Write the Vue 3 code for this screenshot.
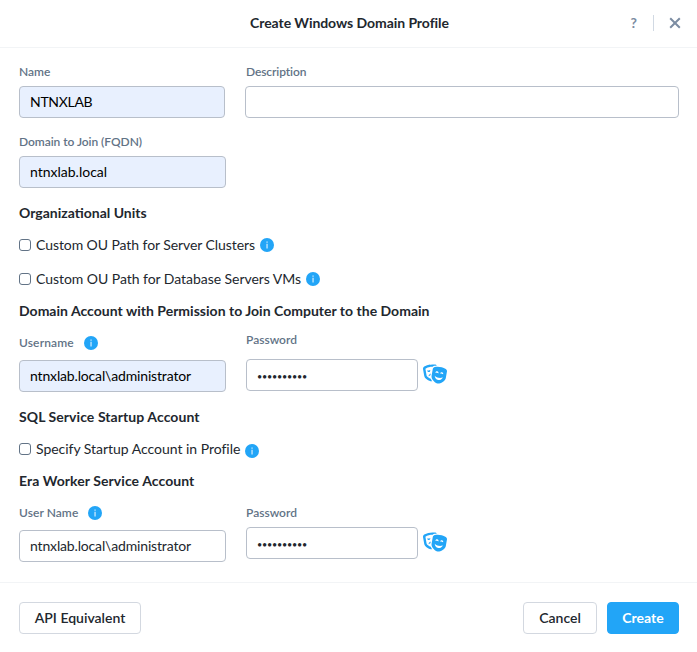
<script setup>
import { reactive } from 'vue'

const MASKS =
  'M206.86 245.15c-35.88 10.45-59.95 41.2-57.53 74.1 11.4-12.72 28.81-23.7 49.9-30.92l7.63-43.18zM95.81 295L64.08 115.49c-.29-1.62.28-2.62.24-2.65 57.76-32.06 123.12-49.01 189.01-49.01 1.61 0 3.23.17 4.85.19 13.95-13.47 31.73-22.83 51.59-26 18.89-3.02 38.05-4.55 57.18-5.32-9.99-13.95-24.48-24.23-41.77-27C301.27 1.89 277.24 0 253.32 0 176.66 0 101.02 19.42 33.2 57.06 9.03 70.48-3.92 98.48 1.05 126.58l31.73 179.51c14.23 80.52 136.33 142.08 204.45 142.08 3.59 0 6.75-.46 10.01-.8-13.52-17.08-28.94-40.48-39.5-67.58-47.61-12.98-106.06-51.62-111.93-84.79zm97.55-137.46c-.73-4.12-2.23-7.87-4.07-11.4-8.25 8.91-20.67 15.75-35.32 18.32-14.65 2.58-28.67.4-39.48-5.17-.52 3.94-.64 7.98.09 12.1 3.84 21.7 24.58 36.19 46.34 32.37 21.75-3.82 36.28-24.52 32.44-46.22zM606.8 120.9c-88.98-49.38-191.43-67.41-291.98-51.35-27.31 4.36-49.08 26.26-54.04 54.36l-31.73 179.51c-15.39 87.05 95.28 196.27 158.31 207.35 63.03 11.09 204.47-53.79 219.86-140.84l31.73-179.51c4.97-28.11-7.98-56.11-32.15-69.52zm-273.24 96.8c3.84-21.7 24.58-36.19 46.34-32.36 21.76 3.83 36.28 24.52 32.45 46.22-.73 4.12-2.23 7.87-4.07 11.4-8.25-8.91-20.67-15.75-35.32-18.32-14.65-2.58-28.67-.4-39.48 5.17-.53-3.95-.65-7.99.08-12.11zm70.47 198.76c-55.68-9.79-93.52-59.27-89.04-112.9 20.6 25.54 56.21 46.17 99.49 53.78 43.28 7.61 83.82.37 111.93-16.6-14.18 51.94-66.71 85.51-122.38 75.72zm130.3-151.34c-8.25-8.91-20.68-15.75-35.33-18.32-14.65-2.58-28.67-.4-39.48 5.17-.52-3.94-.64-7.98.09-12.1 3.84-21.7 24.58-36.19 46.34-32.37 21.75 3.83 36.28 24.52 32.45 46.22-.73 4.13-2.23 7.88-4.07 11.4z'

const form = reactive({
  name: 'NTNXLAB',
  description: '',
  domain: 'ntnxlab.local',
  joinUser: 'ntnxlab.local\\administrator',
  joinPassword: '••••••••••',
  workerUser: 'ntnxlab.local\\administrator',
  workerPassword: '••••••••••',
  clusters: false,
  servers: false,
  startup: false,
})
</script>

<template>
  <div class="dialog">
    <header class="header">
      <h1 class="title">Create Windows Domain Profile</h1>
      <div class="tools">
        <span class="help">?</span>
        <span class="rule"></span>
        <svg class="close" viewBox="0 0 12 12"><path d="M1.2 1.2l9.6 9.6M10.8 1.2l-9.6 9.6" /></svg>
      </div>
    </header>

    <main class="body">
      <div class="row wide">
        <div class="field">
          <label class="label">Name</label>
          <input v-model="form.name" class="input filled t-name" />
        </div>
        <div class="field">
          <label class="label l-desc">Description</label>
          <input v-model="form.description" class="input" />
        </div>
      </div>

      <div class="row">
        <div class="field">
          <label class="label l-domain">Domain to Join (FQDN)</label>
          <input v-model="form.domain" class="input filled" />
        </div>
      </div>

      <h2 class="heading">Organizational Units</h2>
      <label class="check">
        <input v-model="form.clusters" type="checkbox" class="box" />
        <span class="c-clusters">Custom OU Path for Server Clusters</span>
        <span class="info"><svg viewBox="0 0 14 14"><circle cx="7" cy="7" r="7" /><path d="M6.4 3.4h1.3v1.3H6.4zM6.4 5.8h1.3v4.8H6.4z" /></svg></span>
      </label>
      <label class="check second">
        <input v-model="form.servers" type="checkbox" class="box" />
        <span class="c-servers">Custom OU Path for Database Servers VMs</span>
        <span class="info"><svg viewBox="0 0 14 14"><circle cx="7" cy="7" r="7" /><path d="M6.4 3.4h1.3v1.3H6.4zM6.4 5.8h1.3v4.8H6.4z" /></svg></span>
      </label>

      <h2 class="heading tight h-join">Domain Account with Permission to Join Computer to the Domain</h2>
      <div class="row account">
        <div class="field user lowered">
          <div class="label-line">
            <label class="label l-user">Username</label>
            <span class="info"><svg viewBox="0 0 14 14"><circle cx="7" cy="7" r="7" /><path d="M6.4 3.4h1.3v1.3H6.4zM6.4 5.8h1.3v4.8H6.4z" /></svg></span>
          </div>
          <input v-model="form.joinUser" class="input filled t-user" />
        </div>
        <div class="field spaced">
          <label class="label">Password</label>
          <div class="secret">
            <input v-model="form.joinPassword" class="input dots" />
            <svg class="masks" viewBox="0 0 640 512"><path :d="MASKS" /></svg>
          </div>
        </div>
      </div>

      <h2 class="heading h-account">SQL Service Startup Account</h2>
      <label class="check">
        <input v-model="form.startup" type="checkbox" class="box" />
        <span class="c-startup">Specify Startup Account in Profile</span>
        <span class="info low"><svg viewBox="0 0 14 14"><circle cx="7" cy="7" r="7" /><path d="M6.4 3.4h1.3v1.3H6.4zM6.4 5.8h1.3v4.8H6.4z" /></svg></span>
      </label>

      <h2 class="heading tight h-account">Era Worker Service Account</h2>
      <div class="row worker">
        <div class="field user">
          <div class="label-line">
            <label class="label l-worker">User Name</label>
            <span class="info"><svg viewBox="0 0 14 14"><circle cx="7" cy="7" r="7" /><path d="M6.4 3.4h1.3v1.3H6.4zM6.4 5.8h1.3v4.8H6.4z" /></svg></span>
          </div>
          <input v-model="form.workerUser" class="input t-user" />
        </div>
        <div class="field">
          <label class="label">Password</label>
          <div class="secret">
            <input v-model="form.workerPassword" class="input dots" />
            <svg class="masks" viewBox="0 0 640 512"><path :d="MASKS" /></svg>
          </div>
        </div>
      </div>
    </main>

    <footer class="footer">
      <button class="button api">API Equivalent</button>
      <span class="grow"></span>
      <button class="button cancel">Cancel</button>
      <button class="button primary">Create</button>
    </footer>
  </div>
</template>

<style>
body {
  background: #fff;
}
</style>

<style scoped>
* {
  box-sizing: border-box;
}
.dialog {
  width: 697px;
  height: 652px;
  background: #fff;
  color: #22272e;
  font-family: Lato, "Liberation Sans", sans-serif;
  font-size: 14px;
  line-height: 20px;
  white-space: nowrap;
}
.header {
  display: grid;
  grid-template-columns: 1fr auto 1fr;
  align-items: center;
  height: 48px;
  padding: 0 16px 1px 18px;
  border-bottom: 1px solid #f2f4f6;
}
.title {
  grid-column: 2;
  margin: 0;
  font-size: 14px;
  font-weight: 700;
  letter-spacing: -0.06px;
}
.tools {
  display: flex;
  align-items: center;
  justify-content: flex-end;
}
.help {
  color: #7b8ca2;
  font-weight: 700;
}
.rule {
  width: 1px;
  height: 16px;
  margin: 0 15px 0 16px;
  background: #d1d9e3;
}
.close {
  width: 12px;
  height: 12px;
}
.close path {
  fill: none;
  stroke: #7b8ca2;
  stroke-width: 2;
}
.body {
  padding: 0 18px 0 19px;
}
.row {
  display: grid;
  grid-template-columns: 207px 1fr;
  column-gap: 20px;
  margin-top: 16px;
}
.row.wide {
  grid-template-columns: 206px 1fr;
}
.row.account {
  margin-top: 11px;
}
.row.worker {
  margin-top: 14px;
}
.field {
  display: flex;
  flex-direction: column;
  gap: 6px;
}
.field.user {
  gap: 9px;
}
.field.lowered {
  padding-top: 3px;
}
.field.spaced {
  gap: 11px;
}
.label {
  height: 16px;
  color: #627386;
  font-size: 12px;
  font-weight: 600;
  line-height: 16px;
}
.l-desc {
  padding-left: 1px;
  letter-spacing: -0.1px;
}
.l-domain {
  letter-spacing: -0.05px;
}
.l-user {
  letter-spacing: 0.14px;
}
.l-worker {
  letter-spacing: 0.06px;
}
.label-line {
  display: flex;
  align-items: center;
  gap: 10px;
  height: 16px;
}
.input {
  width: 100%;
  height: 32px;
  margin: 0;
  padding: 0 10px 2px;
  border: 1px solid #b8bfca;
  border-radius: 4px;
  outline: none;
  background: #fff;
  color: #22272e;
  font: inherit;
}
.filled {
  background: #e8f0fe;
  color: #000;
}
.t-name {
  letter-spacing: -0.3px;
}
.t-user {
  letter-spacing: -0.16px;
}
.secret {
  display: flex;
  align-items: center;
  gap: 5px;
}
.dots {
  width: 172px;
  padding: 2px 10px 0;
  font-size: 9px;
  letter-spacing: -0.22px;
}
.masks {
  width: 24px;
  height: 20px;
  margin-bottom: 3px;
  fill: #22a5f7;
}
.heading {
  height: 20px;
  margin: 15px 0 0;
  font-size: 14px;
  font-weight: 700;
}
.heading.tight {
  margin-top: 12px;
}
.h-join {
  letter-spacing: 0.017px;
}
.h-account {
  letter-spacing: 0.07px;
}
.check {
  display: flex;
  align-items: center;
  height: 20px;
  margin-top: 12px;
}
.check.second {
  margin-top: 14px;
}
.c-clusters {
  letter-spacing: -0.075px;
}
.c-servers {
  letter-spacing: -0.045px;
}
.c-startup {
  letter-spacing: -0.03px;
}
.box {
  appearance: none;
  width: 12px;
  height: 12px;
  margin: 0 5px 0 0;
  border: 1px solid #627386;
  border-radius: 3px;
  background: #fff;
}
.info {
  display: flex;
  flex: none;
  width: 14px;
  height: 14px;
}
.check .info {
  margin-left: 5px;
}
.check .info.low {
  margin-top: 4px;
}
.info circle {
  fill: #22a5f7;
}
.info path {
  fill: #c8e8fd;
}
.footer {
  display: flex;
  gap: 10px;
  height: 70px;
  margin-top: 20px;
  padding: 19px 18px 0 19px;
  border-top: 1px solid #f2f4f6;
}
.grow {
  flex: 1;
}
.button {
  height: 32px;
  padding: 0;
  border: 1px solid #d3d8e0;
  border-radius: 4px;
  background: #fff;
  color: #22272e;
  font: inherit;
  font-weight: 600;
}
.button.api {
  width: 122px;
}
.button.cancel {
  width: 74px;
}
.button.primary {
  width: 72px;
  border-color: #22a5f7;
  background: #22a5f7;
  color: #fff;
  font-weight: 700;
}
</style>
